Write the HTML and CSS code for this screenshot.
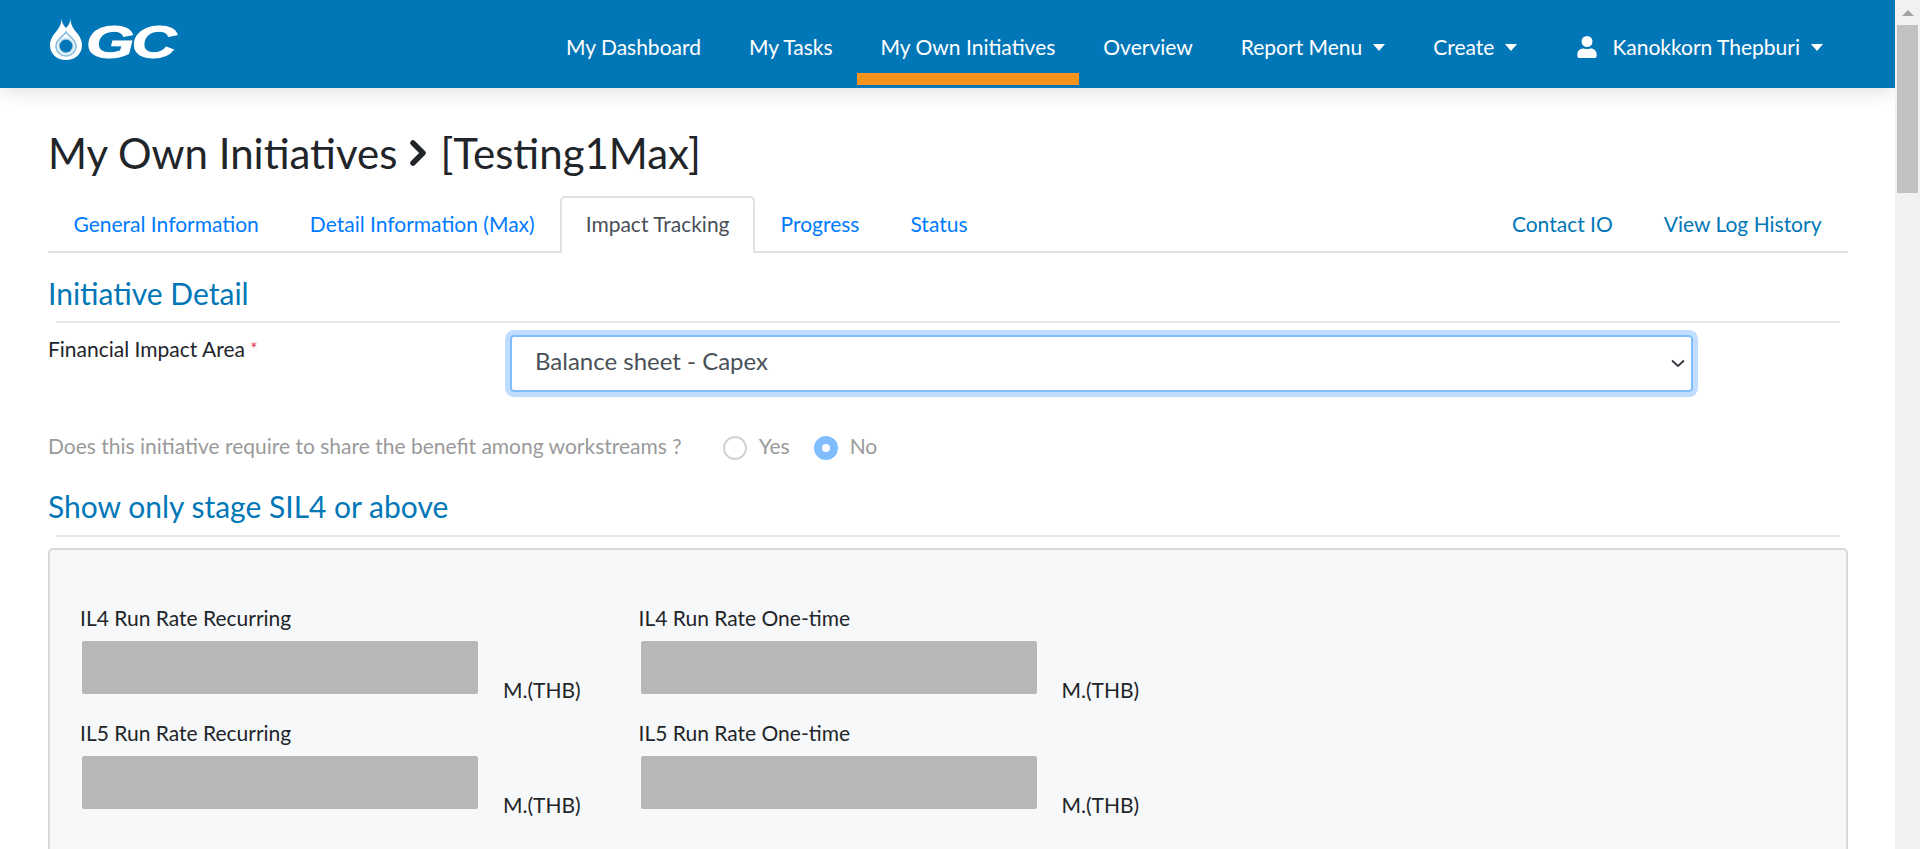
FILE: index.html
```html
<!DOCTYPE html>
<html lang="en">
<head>
  <meta charset="UTF-8">
  <meta name="viewport" content="width=device-width, initial-scale=1.0">
  <title>My Own Initiatives</title>
  <link rel="stylesheet" href="styles.css">
</head>
<body>
  <div class="page">
    <header class="topbar">
      <a class="logo" href="#">
        <svg class="logo-drop" viewBox="0 0 32 42" width="32" height="42">
          <path d="M11 0c1 6-2 10-6 15C1 20 0 24 0 27c0 9 7 15 16 15s16-6 16-15c0-3-1-7-5-12-4-5-7-9-6-15-1 5-3 8-5 10-2-2-4-5-5-10z" fill="#fff"/>
          <path d="M16 14c-2 4-10 7-10 14 0 6 5 10 10 10s10-4 10-10c0-7-8-10-10-14z" fill="none" stroke="#7fbbdc" stroke-width="1.5"/>
          <circle cx="16" cy="28" r="7.5" fill="#0277b8" stroke="#cfe5f2" stroke-width="2"/>
        </svg>
        <span class="logo-text">GC</span>
      </a>
      <nav class="mainnav">
        <a href="#">My Dashboard</a>
        <a href="#">My Tasks</a>
        <a class="active" href="#">My Own Initiatives</a>
        <a href="#">Overview</a>
        <a class="caret" href="#">Report Menu</a>
        <a class="caret" href="#">Create</a>
        <a class="caret user" href="#"><svg viewBox="0 0 448 512" width="20" height="22"><path fill="#fff" d="M224 256a128 128 0 1 0 0-256 128 128 0 0 0 0 256zm90 32h-17a174 174 0 0 1-146 0h-17A134 134 0 0 0 0 422v42c0 27 21 48 48 48h352c27 0 48-21 48-48v-42c0-74-60-134-134-134z"/></svg><span>Kanokkorn Thepburi</span></a>
      </nav>
    </header>

    <main class="content">
      <h1 class="page-title">My Own Initiatives
        <svg class="crumb" viewBox="0 0 18 26" width="18" height="26"><path d="M3 3l10 10L3 23" fill="none" stroke="#212529" stroke-width="5.5" stroke-linejoin="round" stroke-linecap="round"/></svg>
        [Testing1Max]</h1>

      <div class="tabs">
        <a href="#">General Information</a>
        <a href="#">Detail Information (Max)</a>
        <a class="active" href="#">Impact Tracking</a>
        <a href="#">Progress</a>
        <a href="#">Status</a>
        <a class="right first" href="#">Contact IO</a>
        <a class="right last" href="#">View Log History</a>
      </div>

      <h2 class="section-title detail">Initiative Detail</h2>
      <hr class="rule">

      <div class="form-row">
        <label class="form-label">Financial Impact Area <span class="req">*</span></label>
        <div class="select-box">
          <span class="select-value">Balance sheet - Capex</span>
          <svg viewBox="0 0 14 9" width="14" height="9"><path d="M1 1.500L7 7l6-5.500" fill="none" stroke="#343a40" stroke-width="1.800"/></svg>
        </div>
      </div>

      <div class="share-row">
        <span class="share-q">Does this initiative require to share the benefit among workstreams ?</span>
        <span class="radio"></span><span class="radio-text">Yes</span>
        <span class="radio on"></span><span class="radio-text">No</span>
      </div>

      <h2 class="section-title stage">Show only stage SIL4 or above</h2>
      <hr class="rule">

      <section class="panel">
        <div class="field">
          <div class="field-label">IL4 Run Rate Recurring</div>
          <div class="field-row"><div class="field-box"></div><span class="unit">M.(THB)</span></div>
        </div>
        <div class="field">
          <div class="field-label">IL4 Run Rate One-time</div>
          <div class="field-row"><div class="field-box"></div><span class="unit">M.(THB)</span></div>
        </div>
        <div class="field">
          <div class="field-label">IL5 Run Rate Recurring</div>
          <div class="field-row"><div class="field-box"></div><span class="unit">M.(THB)</span></div>
        </div>
        <div class="field">
          <div class="field-label">IL5 Run Rate One-time</div>
          <div class="field-row"><div class="field-box"></div><span class="unit">M.(THB)</span></div>
        </div>
      </section>
    </main>
  </div>

  <div class="scrollbar">
    <div class="scroll-up"></div>
    <div class="scroll-thumb"></div>
  </div>
</body>
</html>
```

FILE: styles.css
```css
* {
  box-sizing: border-box;
}
html, body {
  height: 100%;
}
body {
  font-family: Lato, "Open Sans", sans-serif;
  font-size: 21px;
  color: #212529;
  background-color: #fff;
  margin: 0;
  display: flex;
  overflow: hidden;
}
a {
  text-decoration: none;
}
.page {
  flex: 1;
  min-width: 0;
  height: 100%;
  overflow: hidden;
}

/* top bar */
.topbar {
  height: 88px;
  background-color: #0277b8;
  box-shadow: 0 3px 20px rgba(0, 0, 0, .13);
  display: flex;
  align-items: stretch;
  padding-left: 50px;
  position: relative;
}
.logo {
  display: flex;
  align-items: center;
  height: 78px;
  gap: 4px;
}
.logo-text {
  color: #fff;
  font-family: "Liberation Sans", sans-serif;
  font-weight: 700;
  font-style: italic;
  font-size: 46px;
  line-height: 46px;
  width: 89px;
  display: inline-block;
  transform: scaleX(1.35);
  transform-origin: left center;
  letter-spacing: -2px;
  -webkit-text-stroke: 1px #fff;
  margin-top: 5px;
}
.mainnav {
  margin-left: auto;
  display: flex;
  padding-right: 48px;
}
.mainnav a {
  color: #fff;
  height: 85px;
  line-height: 94px;
  padding: 0 24px;
  display: block;
  white-space: nowrap;
}
.mainnav a.active {
  border-bottom: 12px solid #f7941d;
}
.mainnav a.caret::after {
  content: "";
  display: inline-block;
  margin-left: 11px;
  vertical-align: 4px;
  border-top: 7px solid #fff;
  border-left: 6.5px solid transparent;
  border-right: 6.5px solid transparent;
}
.mainnav a.user {
  margin-left: 12px;
}
.mainnav a.user svg {
  vertical-align: -3px;
  margin-right: 15px;
}

/* main content */
.content {
  padding: 41px 47px 0 48px;
}
.page-title {
  font-size: 42px;
  line-height: 48px;
  font-weight: 400;
  margin: 0 0 19px;
  display: flex;
  align-items: center;
  gap: 12.5px;
  white-space: nowrap;
}
.crumb {
  flex: none;
}
.tabs {
  display: flex;
  height: 57px;
  border-bottom: 2px solid #dee2e6;
}
.tabs a {
  color: #007bff;
  padding: 11px 23.5px 0;
  line-height: 30px;
  height: 57px;
  border: 2px solid transparent;
  border-bottom: 0;
  border-radius: 5px 5px 0 0;
}
.tabs a.active {
  color: #495057;
  background-color: #fff;
  border-color: #dee2e6;
}
.tabs a.right {
  color: #0277b8;
}
.tabs a.first {
  margin-left: auto;
}
.tabs a.last {
  margin-right: 1px;
}
.section-title {
  font-size: 30px;
  line-height: 34px;
  font-weight: 400;
  color: #0277b8;
  margin: 0 0 10px;
}
.section-title.detail {
  margin-top: 23px;
  margin-bottom: 11px;
}
.section-title.stage {
  margin-top: 32px;
  margin-bottom: 12px;
}
.rule {
  border: 0;
  border-top: 2px solid #e8e8e8;
  margin: 0 8px;
}

/* form */
.form-row {
  display: flex;
  margin-top: 12px;
}
.form-label {
  width: 462px;
  line-height: 24px;
  padding-top: 2px;
}
.req {
  color: #dc3545;
  font-size: 17px;
  vertical-align: 2px;
}
.select-box {
  width: 1183px;
  height: 57px;
  border: 2px solid #80bdff;
  border-radius: 4px;
  box-shadow: 0 0 0 5px rgba(0, 123, 255, .25);
  padding: 0 6px 0 23px;
  display: flex;
  align-items: center;
  justify-content: space-between;
  font-size: 24px;
  color: #495057;
}
.select-value {
  margin-top: -7px;
}
.share-row {
  display: flex;
  align-items: center;
  height: 24px;
  margin-top: 41px;
  color: #9a9a9a;
}
.share-q {
  margin-right: 41px;
}
.radio {
  width: 24px;
  height: 24px;
  border-radius: 50%;
  border: 2px solid #cfd3d7;
  background-color: #fff;
  margin-right: 12px;
  margin-top: 5px;
}
.radio.on {
  background-color: #80bdff;
  border: 0;
  position: relative;
}
.radio.on::after {
  content: "";
  position: absolute;
  left: 8px;
  top: 8px;
  width: 8px;
  height: 8px;
  border-radius: 50%;
  background-color: #fff;
}
.radio-text {
  margin-right: 24px;
}

/* panel with run rate fields */
.panel {
  margin-top: 11px;
  height: 400px;
  background-color: #f7f8fa;
  border: 2px solid #d8d8d8;
  border-radius: 5px;
  padding: 56px 30px 0;
  display: grid;
  grid-template-columns: 558.5px 558.5px;
  grid-auto-rows: min-content;
  row-gap: 18px;
}
.field-label {
  line-height: 24px;
}
.field-row {
  display: flex;
  height: 62px;
  margin-top: 11px;
  padding-left: 2px;
}
.field-box {
  width: 396px;
  height: 53px;
  background-color: #b7b7b7;
  border-radius: 2px;
}
.unit {
  align-self: flex-end;
  margin-left: 25px;
  line-height: 24px;
  margin-bottom: 1px;
}

/* scrollbar strip */
.scrollbar {
  width: 25px;
  flex: none;
  height: 100%;
  background-color: #f1f1f1;
  padding: 0 2px;
}
.scroll-up {
  height: 25px;
  position: relative;
}
.scroll-up::after {
  content: "";
  position: absolute;
  left: 5px;
  top: 10px;
  border-bottom: 6px solid #a3a3a3;
  border-left: 6px solid transparent;
  border-right: 6px solid transparent;
}
.scroll-thumb {
  height: 168px;
  background-color: #c1c1c1;
}
```
